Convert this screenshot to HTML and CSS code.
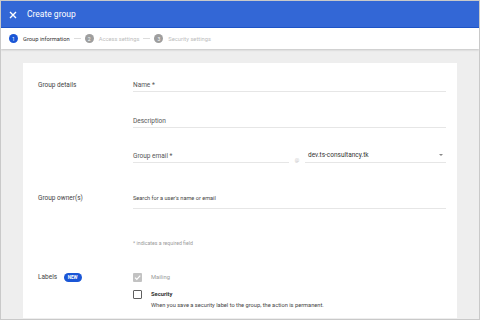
FILE: index.html
```html
<!DOCTYPE html>
<html lang="en">
<head>
    <meta charset="UTF-8">
    <title>Create group</title>
    <link rel="stylesheet" href="styles.css">
</head>
<body>
    <div class="appbar">
        <svg class="close" width="8" height="8" viewBox="0 0 8 8">
            <path d="M1 1L7 7M7 1L1 7" stroke="#fff" stroke-width="1.4"/>
        </svg>
        <span class="title">Create group</span>
    </div>

    <div class="stepper">
        <div class="step active"><span class="num">1</span>Group information</div>
        <span class="dash"></span>
        <div class="step"><span class="num">2</span>Access settings</div>
        <span class="dash"></span>
        <div class="step"><span class="num">3</span>Security settings</div>
    </div>

    <div class="main">
        <div class="card">
            <div class="section">
                <div class="section-label">Group details</div>
                <div class="section-fields">
                    <div class="field">Name *</div>
                    <div class="field field-desc">Description</div>
                    <div class="email-row">
                        <div class="field field-email">Group email *</div>
                        <span class="at">@</span>
                        <div class="field field-domain">
                            <span>dev.ts-consultancy.tk</span>
                            <span class="caret"></span>
                        </div>
                    </div>
                </div>
            </div>

            <div class="section section-owner">
                <div class="section-label">Group owner(s)</div>
                <div class="section-fields">
                    <div class="field field-search">Search for a user's name or email</div>
                </div>
            </div>

            <div class="note">* indicates a required field</div>

            <div class="section section-labels">
                <div class="section-label">Labels <span class="badge">NEW</span></div>
                <div class="section-fields">
                    <div class="check-row">
                        <span class="checkbox checked">
                            <svg width="9" height="9" viewBox="0 0 9 9">
                                <path d="M2 4.6L3.8 6.3L7.2 2.7" stroke="#fff" stroke-width="1.2" fill="none"/>
                            </svg>
                        </span>
                        <span class="check-text muted">Mailing</span>
                    </div>
                    <div class="check-row check-security">
                        <span class="checkbox"></span>
                        <span class="check-text strong">Security</span>
                    </div>
                    <div class="hint">When you save a security label to the group, the action is permanent.</div>
                </div>
            </div>
        </div>
    </div>
</body>
</html>
```

FILE: styles.css
```css
* {
    margin: 0;
    padding: 0;
    box-sizing: border-box;
}

body {
    width: 480px;
    height: 320px;
    overflow: hidden;
    border: 1px solid #c9c9c9;
    background: #eeeeee;
    font-family: Roboto, 'Liberation Sans', sans-serif;
    color: #444;
}

.appbar {
    height: 27px;
    background: #3367d6;
    border-bottom: 1px solid #1f55c9;
    display: flex;
    align-items: center;
    padding-left: 8px;
}

.close {
    margin-top: 1px;
}

.title {
    color: #fff;
    font-size: 8.5px;
    margin-left: 10px;
}

.stepper {
    height: 21px;
    background: #fff;
    display: flex;
    align-items: center;
    padding-left: 8px;
    box-shadow: 0 1px 2px rgba(0,0,0,0.18);
    position: relative;
    font-size: 5.75px;
    color: #bdbdbd;
}

.step {
    display: flex;
    align-items: center;
}

.step .num {
    width: 9px;
    height: 9px;
    border-radius: 50%;
    background: #9e9e9e;
    color: #fff;
    font-size: 5px;
    display: flex;
    align-items: center;
    justify-content: center;
    margin-right: 5px;
}

.step.active {
    color: #333;
}

.step.active .num {
    background: #1a56d6;
}

.dash {
    width: 7px;
    height: 1px;
    background: #dcdcdc;
    margin: 0 4px;
}

.main {
    padding: 14px 22px 0;
}

.card {
    background: #fff;
    height: 255px;
    overflow: hidden;
    padding: 17px 11px 0 15px;
    font-size: 6.5px;
}

.section {
    display: flex;
}

.section-label {
    width: 95px;
    line-height: 10px;
    color: #444;
}

.section-fields {
    flex: 1;
}

.field {
    line-height: 10px;
    padding-bottom: 1px;
    border-bottom: 1px solid #e6e6e6;
    color: #555;
}

.field-desc {
    margin-top: 24px;
}

.email-row {
    display: flex;
    align-items: flex-end;
    margin-top: 22px;
}

.field-email {
    width: 156px;
}

.at {
    width: 16px;
    text-align: center;
    font-size: 5px;
    color: #c4c4c4;
    line-height: 6px;
}

.field-domain {
    flex: 1;
    display: flex;
    justify-content: space-between;
    align-items: center;
    padding-left: 3px;
    padding-right: 3px;
    padding-bottom: 2px;
    color: #333;
}

.caret {
    width: 0;
    height: 0;
    border-left: 2.5px solid transparent;
    border-right: 2.5px solid transparent;
    border-top: 2.5px solid #888;
    margin-top: -1px;
}

.section-owner {
    margin-top: 30px;
}

.field-search {
    font-size: 5.6px;
    color: #444;
    padding-bottom: 5px;
}

.note {
    margin: 29px 0 0 95px;
    line-height: 10px;
    font-size: 5.2px;
    color: #9a9a9a;
}

.section-labels {
    margin-top: 24px;
}

.badge {
    display: inline-block;
    background: #1a56d6;
    color: #fff;
    font-size: 4.6px;
    font-weight: 700;
    line-height: 9px;
    width: 18px;
    text-align: center;
    border-radius: 5px;
    margin-left: 5px;
    vertical-align: top;
    margin-top: 0.5px;
}

.check-row {
    display: flex;
    align-items: center;
    height: 10px;
}

.check-security {
    margin-top: 7px;
}

.checkbox {
    width: 9px;
    height: 9px;
    border: 1.3px solid #5f5f5f;
    border-radius: 1px;
    display: flex;
    align-items: center;
    justify-content: center;
}

.checkbox.checked {
    background: #c2c2c2;
    border: none;
}

.check-text {
    margin-left: 9px;
    font-size: 5.8px;
}

.muted {
    color: #9a9a9a;
}

.strong {
    font-weight: 700;
    color: #333;
}

.hint {
    margin-left: 18px;
    line-height: 12px;
    font-size: 5.7px;
    color: #444;
}
```
